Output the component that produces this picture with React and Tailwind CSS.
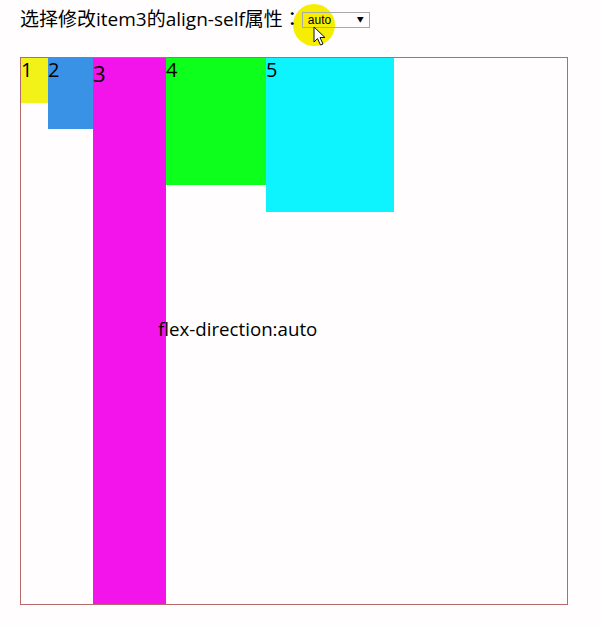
import React, { useState } from 'react';

const items = [
  { id: 1, label: '1', bg: 'bg-[#f2f218]', size: 'w-[27px] h-[45px]', text: 'text-[20px]' },
  { id: 2, label: '2', bg: 'bg-[#3a92e6]', size: 'w-[45px] h-[71px]', text: 'text-[20px]' },
  { id: 3, label: '3', bg: 'bg-[#f214ea]', size: 'w-[73px] self-stretch', text: 'text-[22px] pt-[3px]' },
  { id: 4, label: '4', bg: 'bg-[#0dff1c]', size: 'w-[100px] h-[127px]', text: 'text-[20px]' },
  { id: 5, label: '5', bg: 'bg-[#0df4ff]', size: 'w-[128px] h-[154px]', text: 'text-[20px]' },
];

const Cursor = () => (
  <svg width="14" height="20" viewBox="0 0 14 20" className="absolute left-[313px] top-[26px]">
    <path d="M1 1 L1 16 L4.5 12.5 L7.5 19 L10 18 L7 11.5 L12 11.5 Z" fill="#fff" stroke="#111" strokeWidth="1" strokeLinejoin="round" />
  </svg>
);

const App = () => {
  const [alignSelf, setAlignSelf] = useState('auto');

  return (
    <div className="relative min-h-[626px] w-[600px] bg-[#fffdfd] font-['Open_Sans','Noto_Sans_CJK_SC',sans-serif] text-black">
      {/* highlight behind the select */}
      <div className="absolute left-[293px] top-[4px] h-[42px] w-[42px] rounded-full bg-[#f5ee00]" />

      {/* heading row */}
      <div className="relative flex items-center pl-[20px] h-[36px]">
        <span className="shrink-0 whitespace-nowrap text-[19px] leading-[26px]">
          选择修改item3的align-self属性<span className="font-['Noto_Sans_CJK_TC',sans-serif]">：</span>
        </span>
        <div className="relative ml-auto mr-[231px] mt-[4px] shrink-0">
          <select
            value={alignSelf}
            onChange={(e) => setAlignSelf(e.target.value)}
            className="block appearance-none w-[68px] h-[16px] border border-[#a9a9a9] bg-transparent pl-[5px] text-[12px] leading-[14px] font-['Liberation_Sans',sans-serif] outline-none"
          >
            <option value="auto">auto</option>
            <option value="flex-start">flex-start</option>
            <option value="flex-end">flex-end</option>
            <option value="center">center</option>
            <option value="baseline">baseline</option>
            <option value="stretch">stretch</option>
          </select>
          <span className="pointer-events-none absolute right-[6px] top-[3px] text-[7px] leading-[10px]">▼</span>
        </div>
      </div>
      <Cursor />

      {/* flex container */}
      <div className="relative ml-[20px] mt-[21px] flex h-[548px] w-[548px] items-start border border-[#b86a6a]">
        {items.map((it) => (
          <div key={it.id} className={`${it.bg} ${it.size} ${it.text} leading-[24px]`}>
            {it.label}
          </div>
        ))}
        <p className="absolute left-[137px] top-[259px] text-[18.7px] leading-[24px] whitespace-nowrap">
          flex-direction:{alignSelf}
        </p>
      </div>
    </div>
  );
};

export default App;
